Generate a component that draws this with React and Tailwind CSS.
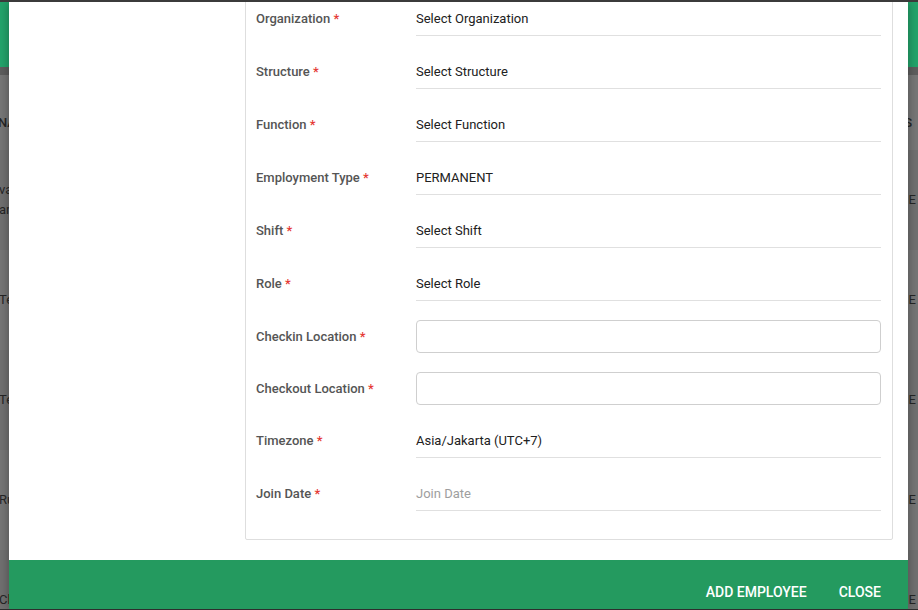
const fields = [
  { label: 'Organization', value: 'Select Organization' },
  { label: 'Structure', value: 'Select Structure' },
  { label: 'Function', value: 'Select Function' },
  { label: 'Employment Type', value: 'PERMANENT' },
  { label: 'Shift', value: 'Select Shift' },
  { label: 'Role', value: 'Select Role' },
  { label: 'Checkin Location', input: true },
  { label: 'Checkout Location', input: true },
  { label: 'Timezone', value: 'Asia/Jakarta (UTC+7)' },
  { label: 'Join Date', placeholder: 'Join Date' },
];

const rows = [
  { left: ['va', 'an'], right: 'E', bg: 'bg-[#707070]' },
  { left: ['Te'], right: 'E', bg: 'bg-[#767676]' },
  { left: ['Te'], right: 'E', bg: 'bg-[#707070]' },
  { left: ['Ru'], right: 'E', bg: 'bg-[#767676]' },
  { left: ['Ch'], right: 'E', bg: 'bg-[#707070]' },
];

function Label({ children }) {
  return (
    <div className="w-[160px] shrink-0 text-[13px] font-medium text-[#555]">
      {children} <span className="text-[#e53935]">*</span>
    </div>
  );
}

function FieldRow({ field }) {
  if (field.input) {
    return (
      <div className="flex items-center pt-[2px] mb-[17px]">
        <Label>{field.label}</Label>
        <div className="flex-1 h-[33px] rounded-[4px] border border-[#cfcfcf] bg-white" />
      </div>
    );
  }
  return (
    <div className="flex items-center mb-[17px]">
      <div className="pt-[2px]">
        <Label>{field.label}</Label>
      </div>
      <div className="flex-1 h-[36px] flex items-center border-b border-[#e0e0e0] pt-[2px] text-[13px]">
        {field.placeholder ? (
          <span className="text-[#9e9e9e]">{field.placeholder}</span>
        ) : (
          <span className="text-[#212121]">{field.value}</span>
        )}
      </div>
    </div>
  );
}

function Backdrop() {
  return (
    <div className="flex flex-col h-full text-[13px] text-[#262626]">
      <div className="h-[65px] bg-[#23a46b] shrink-0" />
      <div className="h-[8px] bg-[#5e5e5e] shrink-0" />
      <div className="h-[75px] bg-[#777] shrink-0 flex items-end justify-between pb-[18px]">
        <span className="-ml-[2px] font-medium">NAME</span>
        <span className="pr-[6px] font-medium">S</span>
      </div>
      {rows.map((r, i) => (
        <div key={i} className={`h-[100px] shrink-0 flex items-center justify-between ${r.bg}`}>
          <div className="-ml-[1px] leading-[20px]">
            {r.left.map((t) => (
              <div key={t}>{t}</div>
            ))}
          </div>
          <span className="pr-[2px]">{r.right}</span>
        </div>
      ))}
    </div>
  );
}

export default function App() {
  return (
    <div
      className="w-[918px] h-[610px] overflow-hidden flex flex-col bg-[#777]"
      style={{ fontFamily: 'Roboto, "Liberation Sans", sans-serif' }}
    >
      <div className="h-[2px] bg-[#3b3b3b] shrink-0" />
      <div className="relative flex-1 overflow-hidden">
        <Backdrop />
        <div className="absolute left-[9px] right-[10px] top-0 bottom-0 flex flex-col shadow-[0_0_10px_rgba(0,0,0,0.35)]">
          <div className="flex-1 bg-white flex flex-col justify-end overflow-hidden pb-[20px] pl-[236px] pr-[15px]">
            <div className="border border-[#dedede] rounded-b-[2px] pl-[10px] pr-[11px] pb-[11px] shrink-0">
              {fields.map((f) => (
                <FieldRow key={f.label} field={f} />
              ))}
            </div>
          </div>
          <div className="h-[49px] shrink-0 bg-[#249a5f] flex items-end justify-end gap-[32px] pr-[27px] pb-[9px]">
            <button className="text-[14px] leading-[16px] font-medium text-white">ADD EMPLOYEE</button>
            <button className="text-[14px] leading-[16px] font-medium text-white">CLOSE</button>
          </div>
        </div>
      </div>
      <div className="h-px bg-[#2e2e2e] shrink-0" />
    </div>
  );
}
